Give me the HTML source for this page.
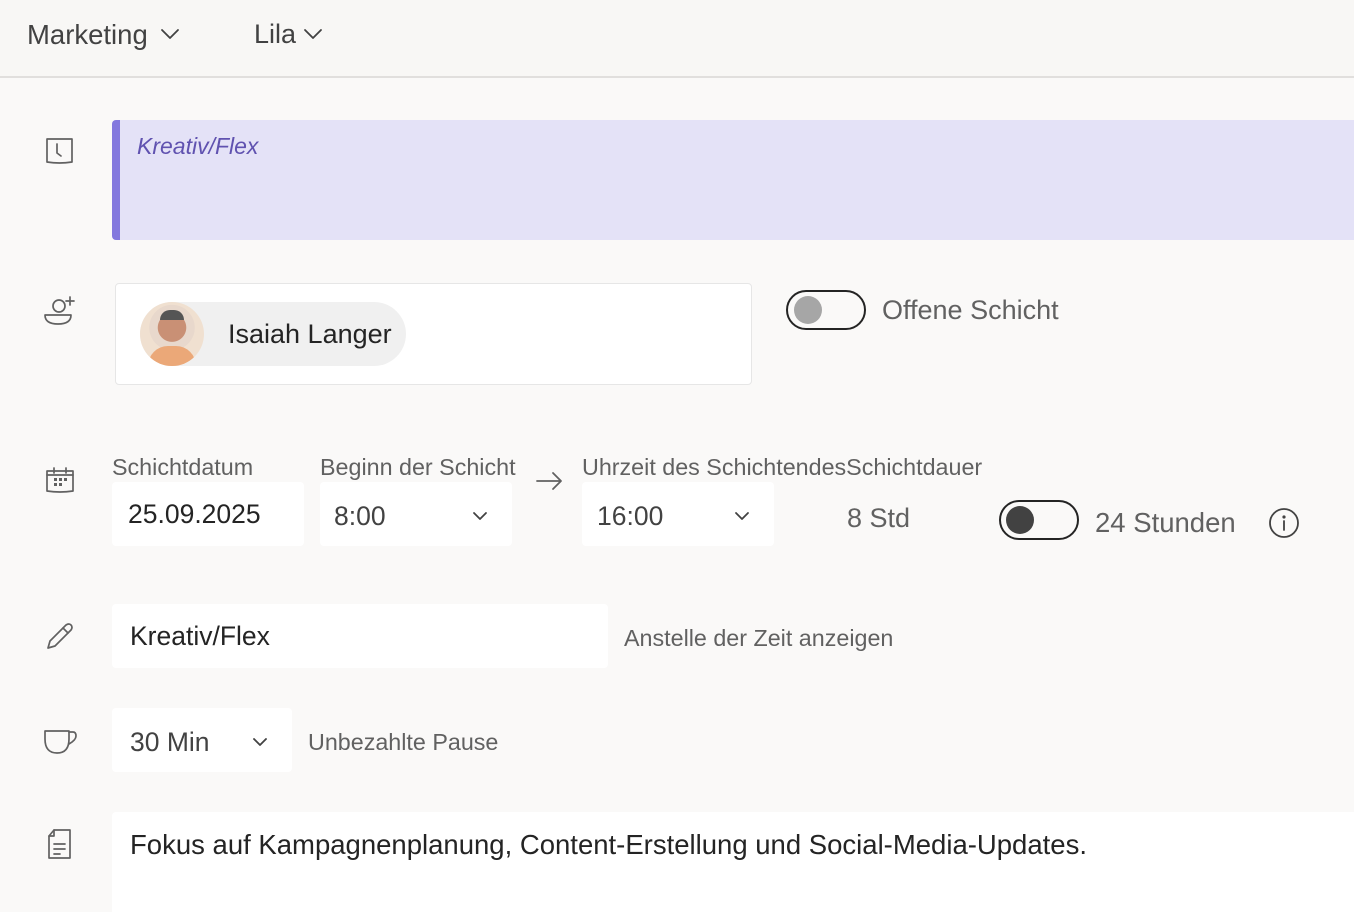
<!DOCTYPE html>
<html><head><meta charset="utf-8"><style>
*{margin:0;padding:0;box-sizing:border-box}
body{width:1354px;height:904px;overflow:hidden;background:#faf9f8;font-family:"Liberation Sans",sans-serif;color:#242424;position:relative}
.a{position:absolute;white-space:nowrap}
.box{position:absolute;background:#fff;border-radius:4px}
.ic{position:absolute;stroke:#616161;fill:none;stroke-width:1.7;stroke-linecap:round;stroke-linejoin:round}
.lbl{font-size:23.3px;color:#616161}
.chev{stroke:#424242;fill:none;stroke-width:1.8;stroke-linecap:round;stroke-linejoin:round}
</style></head><body>
<div class="a" style="left:0;top:0;width:1354px;height:78px;background:#f8f7f5;border-bottom:2px solid #e1dfdd"></div>
<div class="a" style="left:27px;top:19px;font-size:27.5px;color:#424242">Marketing</div>
<svg class="a" style="left:160px;top:27px" width="20" height="14"><path class="chev" d="M2 3l8 8 8-8"/></svg>
<div class="a" style="left:254px;top:19px;font-size:27px;color:#424242">Lila</div>
<svg class="a" style="left:303px;top:27px" width="20" height="14"><path class="chev" d="M2 3l8 8 8-8"/></svg>

<svg class="ic" style="left:44px;top:136px" width="32" height="32"><path d="M3 3h25v23q-12.5 2-25 0z"/><path d="M13 8v9l4 3"/></svg>
<div class="a" style="left:112px;top:120px;width:1242px;height:120px;background:#e4e2f7;border-left:8px solid #8378de;border-radius:4px 0 0 4px"></div>
<div class="a" style="left:137px;top:133px;font-size:23px;font-style:italic;color:#6052b0">Kreativ/Flex</div>

<svg class="ic" style="left:42px;top:294px" width="36" height="34"><circle cx="17" cy="12" r="6"/><path d="M3 21h26q0 9-13 9T3 21z"/><path d="M28 3v8M24 7h8"/></svg>
<div class="box" style="left:115px;top:283px;width:637px;height:102px;border:1px solid #e6e6e6"></div>
<div class="a" style="left:140px;top:302px;width:266px;height:64px;border-radius:32px;background:#f0f0f0"></div>
<div class="a" style="left:140px;top:302px;width:64px;height:64px;border-radius:50%;background:radial-gradient(circle at 50% 40%,#c99075 0 28%,#e8d8cc 29% 45%,#f0e0d0 46%);overflow:hidden"><div style="position:absolute;left:8px;top:44px;width:48px;height:24px;background:#eba878;border-radius:20px 20px 0 0"></div><div style="position:absolute;left:20px;top:8px;width:24px;height:10px;background:#555;border-radius:10px 10px 0 0"></div></div>
<div class="a" style="left:228px;top:319px;font-size:27px;color:#242424">Isaiah Langer</div>

<div class="a" style="left:786px;top:290px;width:80px;height:40px;border:2px solid #242424;border-radius:20px"></div>
<div class="a" style="left:794px;top:296px;width:28px;height:28px;border-radius:50%;background:#a6a6a6"></div>
<div class="a" style="left:882px;top:295px;font-size:27px;color:#616161">Offene Schicht</div>

<svg class="ic" style="left:44px;top:466px" width="32" height="32"><path d="M3 5h26v20q-13 2-26 0z"/><path d="M10 2v5M22 2v5M3 9h26"/><g fill="#616161" stroke="none"><rect x="10" y="12" width="3" height="3"/><rect x="15" y="12" width="3" height="3"/><rect x="20" y="12" width="3" height="3"/><rect x="10" y="17" width="3" height="3"/><rect x="15" y="17" width="3" height="3"/></g></svg>
<div class="a lbl" style="left:112px;top:454px">Schichtdatum</div>
<div class="box" style="left:112px;top:482px;width:192px;height:64px"></div>
<div class="a" style="left:128px;top:499px;font-size:26.5px">25.09.2025</div>
<div class="a lbl" style="left:320px;top:454px">Beginn der Schicht</div>
<div class="box" style="left:320px;top:482px;width:192px;height:64px"></div>
<div class="a" style="left:334px;top:501px;font-size:26.5px;color:#424242">8:00</div>
<svg class="a" style="left:472px;top:510px" width="16" height="12"><path class="chev" d="M2 3l6 6 6-6"/></svg>
<svg class="a" style="left:535px;top:470px" width="30" height="22"><path d="M2 11h24M18 3l8 8-8 8" stroke="#616161" stroke-width="1.8" fill="none" stroke-linecap="round" stroke-linejoin="round"/></svg>
<div class="a lbl" style="left:582px;top:454px">Uhrzeit des SchichtendesSchichtdauer</div>
<div class="box" style="left:582px;top:482px;width:192px;height:64px"></div>
<div class="a" style="left:597px;top:501px;font-size:26.5px;color:#424242">16:00</div>
<svg class="a" style="left:734px;top:510px" width="16" height="12"><path class="chev" d="M2 3l6 6 6-6"/></svg>
<div class="a" style="left:847px;top:503px;font-size:27px;color:#616161">8 Std</div>
<div class="a" style="left:999px;top:500px;width:80px;height:40px;border:2px solid #242424;border-radius:20px"></div>
<div class="a" style="left:1006px;top:506px;width:28px;height:28px;border-radius:50%;background:#424242"></div>
<div class="a" style="left:1095px;top:507px;font-size:27.5px;color:#616161">24 Stunden</div>
<svg class="a" style="left:1268px;top:507px" width="32" height="32"><circle cx="16" cy="16" r="14" fill="none" stroke="#424242" stroke-width="1.8"/><circle cx="16" cy="10" r="1.6" fill="#424242"/><path d="M16 14v9" stroke="#424242" stroke-width="1.8" stroke-linecap="round"/></svg>

<svg class="ic" style="left:44px;top:620px" width="32" height="32"><path d="M4 28l2-7L22 5q3-2 5 0t0 5L11 26z"/><path d="M19 8l5 5"/></svg>
<div class="box" style="left:112px;top:604px;width:496px;height:64px"></div>
<div class="a" style="left:130px;top:621px;font-size:26.5px">Kreativ/Flex</div>
<div class="a lbl" style="left:624px;top:625px">Anstelle der Zeit anzeigen</div>

<svg class="ic" style="left:43px;top:728px" width="34" height="28"><path d="M2 3h24v8q0 14-12 14T2 11z"/><path d="M26 4h4q3 0 3 4t-7 8"/></svg>
<div class="box" style="left:112px;top:708px;width:180px;height:64px"></div>
<div class="a" style="left:130px;top:727px;font-size:26.5px;color:#424242">30 Min</div>
<svg class="a" style="left:252px;top:736px" width="16" height="12"><path class="chev" d="M2 3l6 6 6-6"/></svg>
<div class="a lbl" style="left:308px;top:729px">Unbezahlte Pause</div>

<svg class="ic" style="left:46px;top:828px" width="28" height="34"><path d="M8 2h16v28H3V8z"/><path d="M3 8h5V2M8 16h11M8 21h11M8 26h6"/></svg>
<div class="box" style="left:112px;top:812px;width:1250px;height:100px;border-radius:4px 0 0 0"></div>
<div class="a" style="left:130px;top:829px;font-size:27.5px">Fokus auf Kampagnenplanung, Content-Erstellung und Social-Media-Updates.</div>
</body></html>
